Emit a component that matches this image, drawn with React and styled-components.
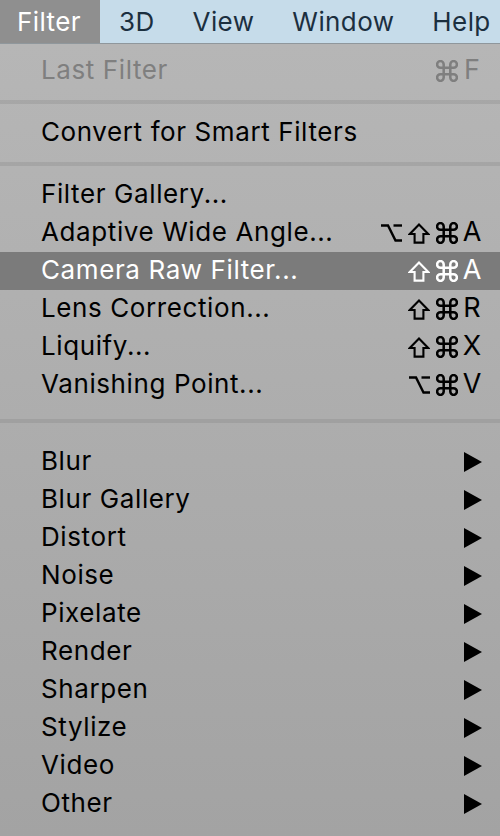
import React from "react";
import styled, { createGlobalStyle } from "styled-components";

const Global = createGlobalStyle`
  html, body { margin: 0; padding: 0; }
  body {
    background: #a5a5a5;
    font-family: Inter, "Noto Sans", "Liberation Sans", sans-serif;
    -webkit-font-smoothing: antialiased;
  }
`;

const Screen = styled.div`
  width: 500px;
  height: 836px;
  display: flex;
  flex-direction: column;
  overflow: hidden;
`;

const MenuBar = styled.div`
  height: 43px;
  flex: 0 0 auto;
  display: flex;
  align-items: stretch;
  background: #c6dcea;
  border-bottom: 1px solid #8f979c;
`;

const BarItem = styled.div`
  display: flex;
  align-items: center;
  padding: 0 19px;
  font-size: 26px;
  letter-spacing: 0.4px;
  color: ${(p) => (p.$open ? "#ffffff" : "#1b2f3f")};
  background: ${(p) => (p.$open ? "#8f8f8f" : "transparent")};
  white-space: nowrap;
  &:first-child { padding-left: 17px; }
`;

const Menu = styled.div`
  flex: 1 1 auto;
  display: flex;
  flex-direction: column;
  padding-top: 8px;
  background: linear-gradient(#b6b6b6, #a3a3a3);
`;

const Row = styled.div`
  height: 38px;
  flex: 0 0 auto;
  display: flex;
  align-items: center;
  justify-content: space-between;
  padding: 0 17px 0 41px;
  font-size: 26px;
  letter-spacing: 0.6px;
  white-space: nowrap;
  color: ${(p) => (p.$active ? "#ffffff" : p.$disabled ? "#7f7f7f" : "#000000")};
  background: ${(p) => (p.$active ? "#7b7b7b" : "transparent")};
`;

const Label = styled.span`
  padding-bottom: 4px;
`;

const Separator = styled.div`
  flex: 0 0 auto;
  padding: ${(p) => (p.$wide ? "15px 0 20px" : "10px 0")};
  &::before {
    content: "";
    display: block;
    height: 4px;
    background: rgba(0, 0, 0, 0.075);
  }
`;

const Shortcut = styled.span`
  display: flex;
  align-items: center;
`;

const ModKey = styled.span`
  width: 28px;
  height: 22px;
  display: flex;
  align-items: center;
  justify-content: center;
  svg { display: block; }
`;

const LetterKey = styled.span`
  width: 22px;
  text-align: center;
  font-size: 27px;
  letter-spacing: 0;
  padding-bottom: 3px;
`;

const SubArrow = styled.span`
  width: 0;
  height: 0;
  margin-right: 1px;
  border-top: 10px solid transparent;
  border-bottom: 10px solid transparent;
  border-left: 18px solid currentColor;
`;

const OptionIcon = () => (
  <svg width="21" height="18" viewBox="0 0 21 18" fill="none" stroke="currentColor" strokeWidth="2.4">
    <path d="M0 1.5 H7 L14.5 16.5 H21" />
    <path d="M12.5 1.5 H21" />
  </svg>
);

const ShiftIcon = () => (
  <svg width="22" height="21" viewBox="0 0 22 21" fill="none" stroke="currentColor" strokeWidth="2.1" strokeLinejoin="miter">
    <polygon points="11,1.6 1.8,11 6.6,11 6.6,19.6 15.4,19.6 15.4,11 20.2,11" />
  </svg>
);

const CommandIcon = () => (
  <svg width="22" height="22" viewBox="2 2 20 20" fill="none" stroke="currentColor" strokeWidth="2.3">
    <path d="M15 6v12a3 3 0 1 0 3-3H6a3 3 0 1 0 3 3V6a3 3 0 1 0-3 3h12a3 3 0 1 0-3-3" />
  </svg>
);

const modIcons = { opt: OptionIcon, shift: ShiftIcon, cmd: CommandIcon };

const Keys = ({ mods, letter }) => (
  <Shortcut>
    {mods.map((m) => {
      const Icon = modIcons[m];
      return (
        <ModKey key={m}>
          <Icon />
        </ModKey>
      );
    })}
    <LetterKey>{letter}</LetterKey>
  </Shortcut>
);

const barItems = ["Filter", "3D", "View", "Window", "Help"];

const groups = [
  { items: [{ label: "Last Filter", disabled: true, keys: { mods: ["cmd"], letter: "F" } }] },
  { items: [{ label: "Convert for Smart Filters" }] },
  {
    items: [
      { label: "Filter Gallery..." },
      { label: "Adaptive Wide Angle...", keys: { mods: ["opt", "shift", "cmd"], letter: "A" } },
      { label: "Camera Raw Filter...", active: true, keys: { mods: ["shift", "cmd"], letter: "A" } },
      { label: "Lens Correction...", keys: { mods: ["shift", "cmd"], letter: "R" } },
      { label: "Liquify...", keys: { mods: ["shift", "cmd"], letter: "X" } },
      { label: "Vanishing Point...", keys: { mods: ["opt", "cmd"], letter: "V" } },
    ],
  },
  {
    wide: true,
    items: ["Blur", "Blur Gallery", "Distort", "Noise", "Pixelate", "Render", "Sharpen", "Stylize", "Video", "Other"].map(
      (label) => ({ label, submenu: true })
    ),
  },
];

export default function App() {
  return (
    <Screen>
      <Global />
      <MenuBar>
        {barItems.map((t, i) => (
          <BarItem key={t} $open={i === 0}>
            {t}
          </BarItem>
        ))}
      </MenuBar>
      <Menu>
        {groups.map((g, gi) => (
          <React.Fragment key={gi}>
            {gi > 0 && <Separator $wide={g.wide} />}
            {g.items.map((it) => (
              <Row key={it.label} $active={it.active} $disabled={it.disabled}>
                <Label>{it.label}</Label>
                {it.keys && <Keys {...it.keys} />}
                {it.submenu && <SubArrow />}
              </Row>
            ))}
          </React.Fragment>
        ))}
      </Menu>
    </Screen>
  );
}
